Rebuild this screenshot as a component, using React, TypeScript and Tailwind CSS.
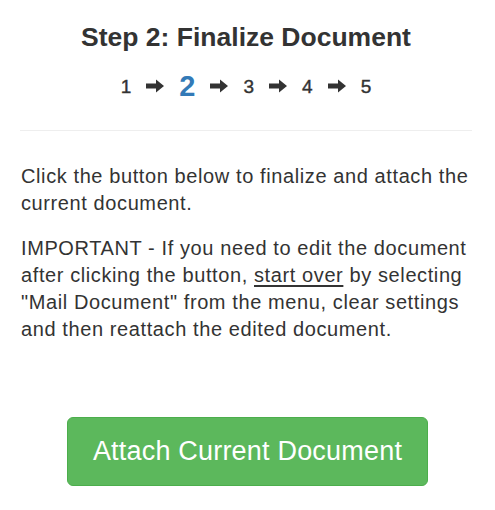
export default function App() {
  const steps = [1, 2, 3, 4, 5];
  return (
    <div className="min-h-[510px] w-[495px] bg-white pl-5 pr-[23px] font-['Liberation_Sans',Arial,sans-serif] text-[#333]">
      {/* Header */}
      <div className="pt-[22px] text-center">
        <h1 className="text-[26.5px] font-bold leading-[30px]">Step 2: Finalize Document</h1>
        <div className="mt-[18px] flex h-[32px] items-center justify-center gap-[14px]">
          {steps.map((n, i) => (
            <div key={n} className="flex items-center gap-[14px]">
              {i > 0 && (
                <svg width="20" height="16" viewBox="0 0 20 16" className="text-[#333]">
                  <path d="M1 5.5h10V1.5L19 8l-8 6.5V10.5H1z" fill="currentColor" />
                </svg>
              )}
              <span
                className={
                  n === 2
                    ? "text-[29px] font-bold leading-none text-[#337ab7]"
                    : "text-[19px] leading-none [-webkit-text-stroke:0.4px_#333]"
                }
              >
                {n}
              </span>
            </div>
          ))}
        </div>
      </div>

      <hr className="mt-[28px] border-t border-[#eee]" />

      {/* Body */}
      <div className="pt-[32px] pl-px text-[20px] leading-[27px] tracking-[0.6px]">
        <p>Click the button below to finalize and attach the current document.</p>
        <p className="mt-[18px]">
          IMPORTANT - If you need to edit the document after clicking the button,{" "}
          <span className="underline underline-offset-[3px]">start over</span> by selecting "Mail Document" from the menu,
          clear settings and then reattach the edited document.
        </p>
      </div>

      <div className="flex justify-center pl-[3px] pt-[74px]">
        <button className="h-[69px] w-[361px] rounded-[6px] border border-[#4cae4c] bg-[#5cb85c] text-[27px] tracking-[0.2px] text-white">
          Attach Current Document
        </button>
      </div>
    </div>
  );
}
